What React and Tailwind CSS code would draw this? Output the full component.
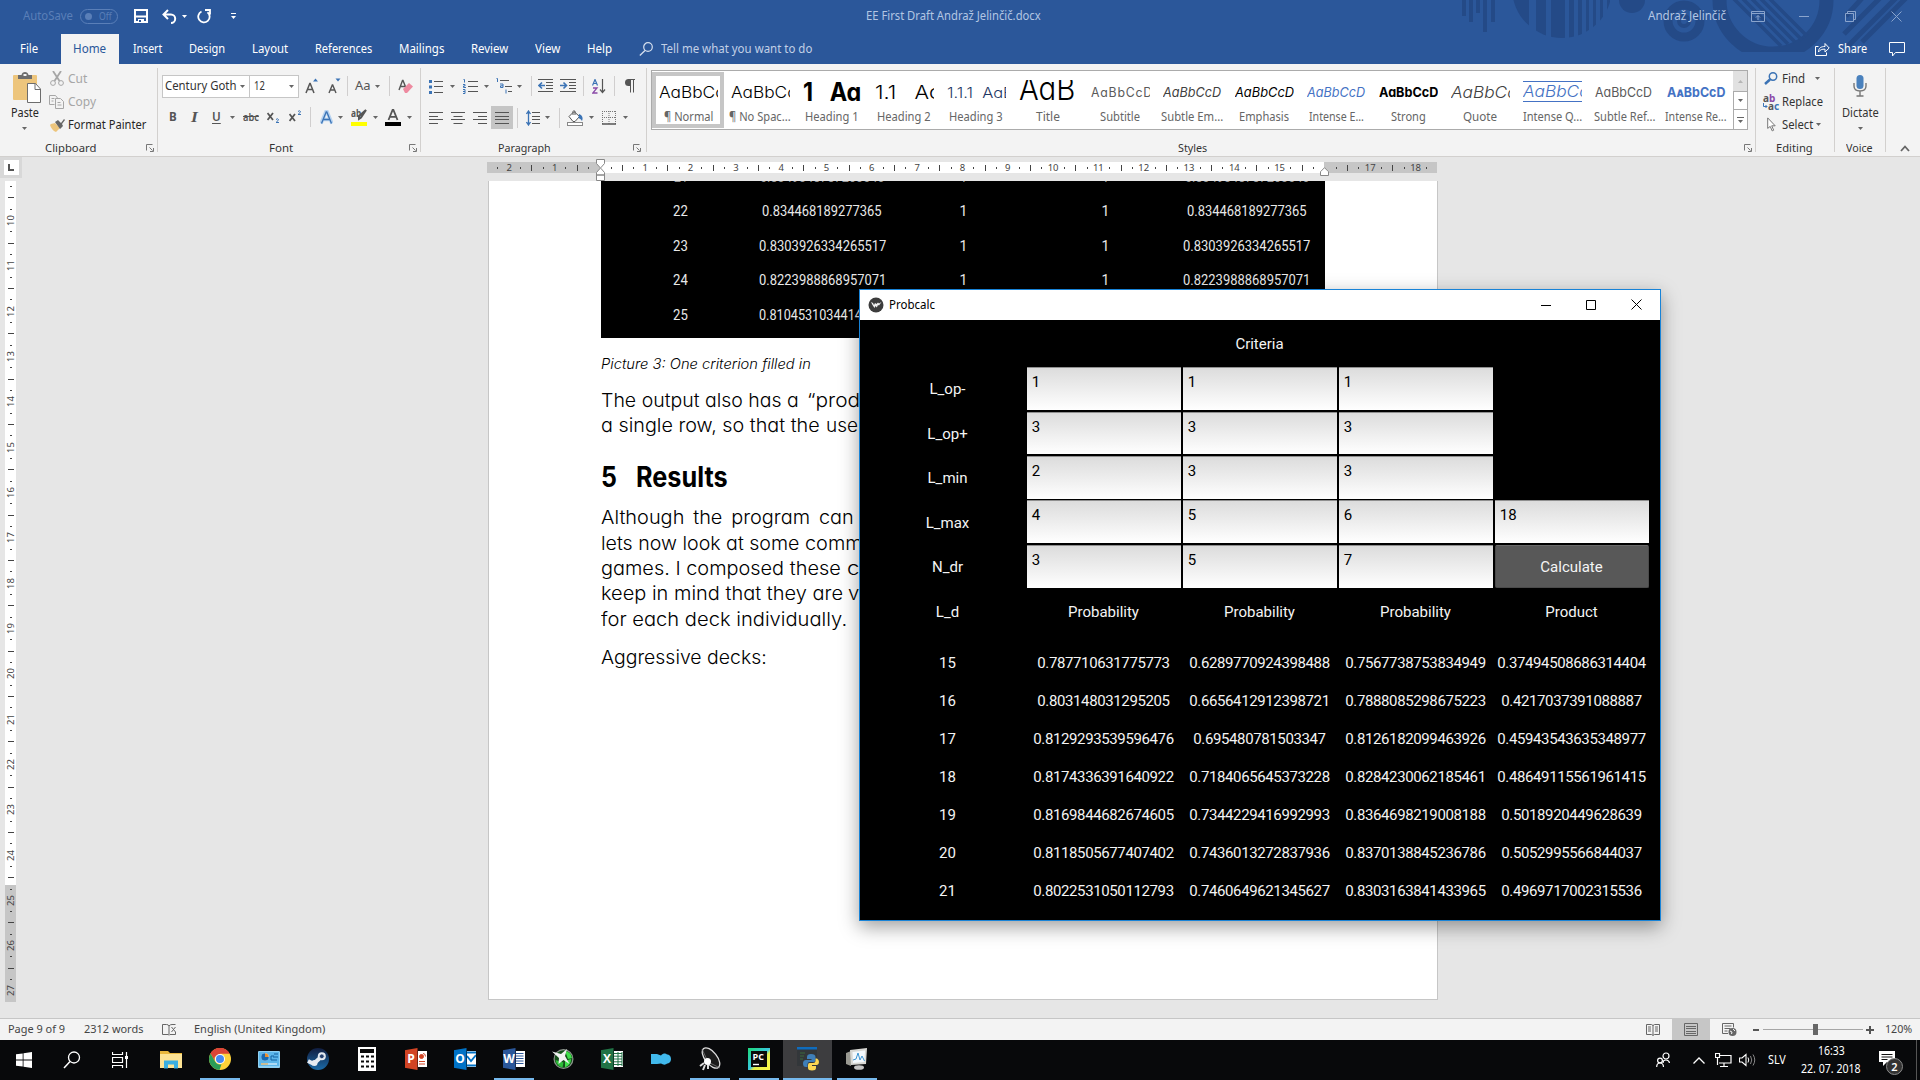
import React, { useLayoutEffect, useRef } from "react";

/* Text stretched horizontally to fill the width of its box. */
function Fit({ className = "", children }) {
  const box = useRef(null);
  const inner = useRef(null);
  useLayoutEffect(() => {
    const natural = inner.current.offsetWidth;
    const wanted = box.current.clientWidth;
    if (natural > 0 && wanted > 0) {
      inner.current.style.transform = `scaleX(${wanted / natural})`;
    }
  }, []);
  return (
    <span ref={box} className={`block shrink-0 whitespace-nowrap ${className}`}>
      <span ref={inner} className="inline-block origin-left whitespace-pre">{children}</span>
    </span>
  );
}

function Svg({ w, h, className = "", children }) {
  return (
    <svg width={w} height={h} viewBox={`0 0 ${w} ${h}`} fill="none" className={`block shrink-0 ${className}`}>
      {children}
    </svg>
  );
}

const Caret = ({ className = "", fill = "#666" }) => (
  <Svg w={5} h={3} className={className}><path d="M0 0h5L2.5 3z" fill={fill} /></Svg>
);
const Sep = ({ className = "" }) => <span className={`block h-5 w-px shrink-0 bg-[#d0cece] ${className}`} />;
const Launcher = ({ className = "" }) => (
  <Svg w={8} h={8} className={className}>
    <path d="M.5 6.5v-6h6M3.5 3.5l3 3M7.5 4v3.5H4" stroke="#777" />
  </Svg>
);

/* ---------- title bar ---------- */

function Decoration() {
  return (
    <Svg w={400} h={52} className="absolute left-[1455px] top-0">
      <g fill="#244a87">
        <rect x="7" width="4" height="16" /><rect x="14" width="4" height="22" />
        <rect x="21" width="4" height="13" /><rect x="28" width="4" height="32" /><rect x="36" width="4" height="22" />
        <clipPath id="ball"><circle cx="107" cy="-12" r="50" /></clipPath>
        <g clipPath="url(#ball)">
          <path d="M55 0h19v40H55zM81 0h10v40H81zM96 0h14v40H96zM114 0h5v40h-5zM123 0h4v40h-4zM131 0h3v40h-3zM138 0h3v40h-3zM145 0h3v40h-3zM152 0h3v40h-3z" />
        </g>
        <circle cx="177" cy="0" r="13" />
        <circle cx="229" cy="21" r="7" />
      </g>
      <circle cx="229" cy="21" r="16" stroke="#244a87" strokeWidth="9" />
      <circle cx="229" cy="21" r="3" fill="#2b579a" />
      <circle cx="318" cy="0" r="53.500" stroke="#244a87" strokeWidth="14" />
      <g stroke="#244a87" strokeWidth="3.500">
        <path d="M276 -4l50 50M285 -4l48 48M294 -4l46 46M303 -4l44 44M312 -4l40 40" />
      </g>
    </Svg>
  );
}

function DecorationRight() {
  return (
    <Svg w={80} h={52} className="absolute left-[1840px] top-0">
      <g stroke="#244a87" strokeWidth="5">
        <path d="M6 16L24 -4M4 34L42 -4M8 46L58 -4M22 42L66 -2" />
      </g>
    </Svg>
  );
}

function TitleBar() {
  return (
    <div className="relative flex h-[34px] items-center overflow-hidden pb-[2px] text-[12px] text-[#b3c6e3]">
      <Fit className="ml-[23px] w-[50px] text-[#5a7fb8]">AutoSave</Fit>
      <span className="ml-[7px] flex h-[15px] w-[38px] shrink-0 items-center rounded-full border border-[#5a7fb8] pl-[4px]">
        <span className="block size-[7px] rounded-full bg-[#5a7fb8]" />
        <Fit className="ml-[7px] w-[13px] text-[10px] text-[#5a7fb8]">Off</Fit>
      </span>
      <Svg w={14} h={14} className="ml-[16px]">
        <path d="M1 1h12v12H1z" stroke="#fff" strokeWidth="2" /><path d="M2 6.500h10v2H2zM4 10h6v4H4z" fill="#fff" /><path d="M5 11h2v2H5z" fill="#2b579a" />
      </Svg>
      <Svg w={15} h={15} className="ml-[14px]">
        <path d="M1.500 5.500H9a4.200 4.200 0 0 1 0 8.400M6 1L1.500 5.500 6 10" stroke="#fff" strokeWidth="2" />
      </Svg>
      <Caret className="ml-[5px]" fill="#fff" />
      <Svg w={14} h={15} className="ml-[10px]">
        <path d="M4.500 2.500A5.700 5.700 0 1 0 10.500 3.200M8 1h5v4.500" stroke="#fff" strokeWidth="1.800" />
      </Svg>
      <Svg w={5} h={7} className="ml-[20px]"><path d="M0 .5h5" stroke="#fff" /><path d="M0 3h5L2.500 6z" fill="#fff" /></Svg>
      <Fit className="ml-[630px] w-[175px]">EE First Draft Andraž Jelinčič.docx</Fit>
      <Fit className="relative z-10 ml-[607px] w-[78px]">Andraž Jelinčič</Fit>
      <Svg w={14} h={11} className="relative z-10 ml-[25px]">
        <path d="M.5.5h13v10H.5zM.5 2.500h13M7 9V4.500M5 6.500l2-2 2 2" stroke="#8aa4cd" />
      </Svg>
      <Svg w={10} h={11} className="relative z-10 ml-[34px]"><path d="M0 5.500h10" stroke="#8aa4cd" /></Svg>
      <Svg w={11} h={11} className="relative z-10 ml-[36px]"><path d="M.5 2.500h8v8h-8zM2.500 2.500v-2h8v8h-2" stroke="#8aa4cd" /></Svg>
      <Svg w={11} h={11} className="relative z-10 ml-[35px]"><path d="M.5.5l10 10M10.500.5l-10 10" stroke="#8aa4cd" /></Svg>
    </div>
  );
}

function Tabs() {
  return (
    <div className="relative z-10 flex h-[30px] items-center text-[12px] text-white">
      <Fit className="ml-[20px] w-[18px]">File</Fit>
      <span className="ml-[23px] flex h-full w-[58px] shrink-0 items-center bg-[#f3f3f3] pl-[12px] text-[#2b579a]">
        <Fit className="w-[33px]">Home</Fit>
      </span>
      <Fit className="ml-[14px] w-[29px]">Insert</Fit>
      <Fit className="ml-[27px] w-[36px]">Design</Fit>
      <Fit className="ml-[27px] w-[36px]">Layout</Fit>
      <Fit className="ml-[27px] w-[57px]">References</Fit>
      <Fit className="ml-[27px] w-[45px]">Mailings</Fit>
      <Fit className="ml-[27px] w-[37px]">Review</Fit>
      <Fit className="ml-[27px] w-[25px]">View</Fit>
      <Fit className="ml-[27px] w-[25px]">Help</Fit>
      <Svg w={14} h={14} className="ml-[27px]"><circle cx="9" cy="5" r="4.300" stroke="#d5dfee" strokeWidth="1.200" /><path d="M6 8.500L.8 13.500" stroke="#d5dfee" strokeWidth="1.300" /></Svg>
      <Fit className="ml-[8px] w-[151px] text-[#c2d0e6]">Tell me what you want to do</Fit>
      <Svg w={15} h={14} className="ml-[1003px]">
        <path d="M3.500 4.500h-3v9h11v-3M3.500 10c0-4 2.500-5.500 6.500-5.500V1.500L14.200 6 10 10V7.200C7 7 5 7.800 3.500 10z" stroke="#fff" />
      </Svg>
      <Fit className="ml-[8px] w-[29px]">Share</Fit>
      <Svg w={16} h={15} className="ml-[22px]"><path d="M.5.500h15v10h-9l-3 3.500v-3.500h-3z" stroke="#fff" /></Svg>
    </div>
  );
}

/* ---------- ribbon ---------- */

function Group({ label, labelClass, width, launcher, children }) {
  return (
    <div className={`mt-1 flex h-[84px] shrink-0 flex-col border-r border-[#d2d0ce] ${width}`}>
      <div className="h-[71px] shrink-0">{children}</div>
      <div className="flex h-[18px] shrink-0 items-center text-[11.5px] text-[#333]">
        <Fit className={labelClass}>{label}</Fit>
        {launcher && <Launcher className={launcher} />}
      </div>
    </div>
  );
}

function Clipboard() {
  return (
    <Group label="Clipboard" labelClass="ml-[45px] w-[51px]" width="w-[158px]" launcher="ml-[50px]">
      <div className="flex text-[12px] text-[#262626]">
        <div className="w-[50px] shrink-0 pl-[11px] pt-[4px]">
          <Svg w={29} h={31} className="ml-[2px]">
            <rect y="3" width="24" height="25" rx="1" fill="#edc57c" />
            <path d="M5 3h3.500c.5-4 6.500-4 7 0H19v4H5z" fill="#6d6d6d" /><rect x="10.500" y="2" width="3" height="2" fill="#f3f3f3" />
            <path d="M14.500 11.500h8l5 5.500v13.500h-13z" fill="#fff" stroke="#6d6d6d" /><path d="M22 11.500v6h6" stroke="#6d6d6d" />
          </Svg>
          <Fit className="mt-[1px] w-[28px] leading-[18px]">Paste</Fit>
          <Caret className="ml-[11px] mt-[5px]" />
        </div>
        <div className="-mt-px w-[107px]">
          <div className="flex h-[23px] items-center text-[#a6a6a6]">
            <Svg w={14} h={15}><path d="M3 0l6.500 10M11 0L4.500 10" stroke="#a6a6a6" strokeWidth="1.800" /><circle cx="3" cy="12" r="2.400" stroke="#a6a6a6" /><circle cx="11" cy="12" r="2.400" stroke="#a6a6a6" /></Svg>
            <Fit className="ml-[4px] w-[19px]">Cut</Fit>
          </div>
          <div className="flex h-[23px] items-center text-[#a6a6a6]">
            <Svg w={15} h={14} className="-ml-px"><path d="M5.500 9.500h-5v-9h6l2 2.500M2.500 3.500h3M2.500 6h2M6.500 3.500h5l3 3v7h-8zM8.500 7.500h3M8.500 10h4" stroke="#a6a6a6" /></Svg>
            <Fit className="ml-[4px] w-[28px]">Copy</Fit>
          </div>
          <div className="flex h-[23px] items-center">
            <Svg w={15} h={14}><path d="M1 6l4-1 5 5-4 4C3 13 1 10 0 7z" fill="#edc57c" /><path d="M5 4l3-2 3 3 3-4 1 1-3 4 1 2-3 3z" fill="#666" /></Svg>
            <Fit className="ml-[3px] w-[78px]">Format Painter</Fit>
          </div>
        </div>
      </div>
    </Group>
  );
}

function FontGroup() {
  return (
    <Group label="Font" labelClass="ml-[111px] w-[24px]" width="w-[263px]" launcher="ml-[116px]">
      <div className="flex h-[29px] items-center pt-[7px] text-[#555]">
        <div className="ml-[4px] flex h-[23px] w-[88px] shrink-0 items-center border border-[#c6c6c6] bg-white text-[12px] text-[#333]">
          <Fit className="ml-[2px] w-[71px]">Century Goth</Fit><Caret className="ml-[4px]" />
        </div>
        <div className="flex h-[23px] w-[49px] shrink-0 items-center border border-l-0 border-[#c6c6c6] bg-white text-[12px] text-[#333]">
          <Fit className="ml-[4px] w-[11px]">12</Fit><Caret className="ml-[24px]" />
        </div>
        <Svg w={14} h={16} className="ml-[6px]"><path d="M1 15L4.800 5.500h.4L9 15M2.500 11.500h5" stroke="#555" strokeWidth="1.500" /><path d="M8 3.500h5L10.500.5z" fill="#3b73b5" /></Svg>
        <Svg w={13} h={16} className="ml-[9px]"><path d="M1 15L4.300 7h.4L8 15M2 12h5" stroke="#555" strokeWidth="1.400" /><path d="M7.500.5h5l-2.500 3z" fill="#3b73b5" /></Svg>
        <Sep className="ml-[6px]" />
        <Fit className="ml-[7px] w-[16px] text-[13px]">Aa</Fit>
        <Caret className="ml-[4px]" />
        <Sep className="ml-[9px]" />
        <Svg w={15} h={15} className="ml-[8px]"><path d="M1 11L4.500 1.500h.5L8 9M2 7.500h5" stroke="#555" strokeWidth="1.400" /><path d="M5 10l6-6 4 3.500-6 6.500H7z" fill="#ee8aa0" /></Svg>
      </div>
      <div className="mt-[9px] flex h-[22px] items-center text-[13px] text-[#555]">
        <Fit className="ml-[11px] w-[8px] font-bold">B</Fit>
        <Fit className="ml-[14px] w-[7px] font-['Liberation_Serif'] text-[15px] font-bold italic">I</Fit>
        <Fit className="ml-[14px] w-[9px] font-semibold [&>span]:underline [&>span]:underline-offset-2">U</Fit>
        <Caret className="ml-[9px]" />
        <Fit className="ml-[8px] w-[16px] text-[11px] font-semibold [&>span]:line-through">abc</Fit>
        <Svg w={13} h={14} className="ml-[8px]"><path d="M.5 3l5.500 7M6 3L.5 10" stroke="#555" strokeWidth="1.800" /><path d="M9 9.500q1.500-1.500 2.500 0 0 1-2.500 3h3" stroke="#3b73b5" /></Svg>
        <Svg w={13} h={14} className="ml-[9px]"><path d="M.5 4l5.500 7M6 4L.5 11" stroke="#555" strokeWidth="1.800" /><path d="M9 1.500q1.500-1.500 2.500 0 0 1-2.500 3h3" stroke="#3b73b5" /></Svg>
        <Sep className="ml-[8px]" />
        <Svg w={13} h={15} className="ml-[9px]"><path d="M1 13.500L6 1.500h1l5 12M3.500 9.500h6" stroke="#b8d3f0" strokeWidth="3.500" /><path d="M1.500 13.500L6.200 2h.6l4.700 11.500M3.500 9.500h6" stroke="#3b73b5" strokeWidth="1.300" /></Svg>
        <Caret className="ml-[5px]" />
        <div className="ml-[8px] flex w-[16px] shrink-0 flex-col">
          <div className="flex h-[13px] items-start">
            <Fit className="-mt-[2px] w-[10px] text-[10px] font-bold leading-[12px]">ab</Fit>
            <Svg w={9} h={12} className="-ml-[3px]"><path d="M8 1L3 8.500l-3 2 1-3.500z" stroke="#555" strokeWidth="2" /></Svg>
          </div>
          <span className="block h-[4px] bg-[#ffff00]" />
        </div>
        <Caret className="ml-[6px]" />
        <Svg w={16} h={17} className="ml-[7px]"><path d="M3.500 11L7.600 1h.8l4.100 10M5 7.800h6" stroke="#555" strokeWidth="1.800" /><rect y="13" width="16" height="4" fill="#000" /></Svg>
        <Caret className="ml-[6px]" />
      </div>
    </Group>
  );
}

const Lines = ({ d, className = "" }) => <Svg w={14} h={12} className={className}><path d={d} stroke="#555" /></Svg>;

function Paragraph() {
  return (
    <Group label="Paragraph" labelClass="ml-[77px] w-[53px]" width="w-[226px]" launcher="ml-[82px]">
      <div className="flex h-[29px] items-center pt-[7px]">
        <Svg w={14} h={15} className="ml-[8px]"><path d="M5 2.500h9M5 7.500h9M5 13.500h9" stroke="#555" /><path d="M0 1h3v3H0zM0 6.500h3v3H0zM0 12h3v3H0z" fill="#3b73b5" /></Svg>
        <Caret className="ml-[7px]" />
        <Svg w={15} h={16} className="ml-[8px]"><path d="M5 3.500h10M5 8.500h10M5 13.500h10" stroke="#555" /><path d="M.5 1.500h1v3M0 6.500h2v1.500H.5v1.500H3M0 11.500h2v4H0M0 13.500h2" stroke="#3b73b5" /></Svg>
        <Caret className="ml-[6px]" />
        <Svg w={16} h={16} className="ml-[7px]"><path d="M4 2.500h9M9 8.500h7M12 13.500h4" stroke="#555" /><path d="M.5.500h1v3.500M4 6h3v3.500H4.500V7.800H7M10 11.500v4" stroke="#3b73b5" /></Svg>
        <Caret className="ml-[5px]" />
        <Sep className="ml-[9px]" />
        <Svg w={15} h={14} className="ml-[6px]"><path d="M0 .5h15M8 3.500h7M8 6.500h7M8 9.500h7M0 12.500h15" stroke="#555" /><path d="M7 6.500H1M4 3.500L1 6.500l3 3" stroke="#3b73b5" strokeWidth="1.600" /></Svg>
        <Svg w={16} h={14} className="ml-[7px]"><path d="M0 .5h16M9 3.500h7M9 6.500h7M9 9.500h7M0 12.500h16" stroke="#555" /><path d="M0 6.500h6M3.500 3.500l3 3-3 3" stroke="#3b73b5" strokeWidth="1.600" /></Svg>
        <Sep className="ml-[7px]" />
        <Svg w={14} h={15} className="ml-[8px]"><path d="M.5 6.500L3 .5l2.500 6M1.500 4.500h3" stroke="#3b73b5" strokeWidth="1.200" /><path d="M1 9h4L.8 14H5.500" stroke="#8a4aa8" strokeWidth="1.300" /><path d="M10.500 0v13M8 10.500l2.500 3 2.500-3" stroke="#555" strokeWidth="1.200" /></Svg>
        <Sep className="ml-[8px]" />
        <Svg w={10} h={14} className="ml-[10px]"><path d="M5.500.5v13M8.500.5v13M3.500.5H10" stroke="#555" /><path d="M5 0H3.500a3.200 3.200 0 0 0 0 7H5z" fill="#555" /></Svg>
      </div>
      <div className="mt-[9px] flex h-[23px] items-center">
        <Lines d="M0 .5h14M0 4.500h9M0 7.500h14M0 11.500h9" className="ml-[8px]" />
        <Lines d="M0 .5h14M2.500 4.500h9M0 7.500h14M2.500 11.500h9" className="ml-[8px]" />
        <Lines d="M0 .5h14M5 4.500h9M0 7.500h14M5 11.500h9" className="ml-[8px]" />
        <span className="ml-[4px] flex h-[23px] w-[22px] shrink-0 items-center justify-center bg-[#c5c5c5]">
          <Lines d="M0 .5h14M0 4.500h14M0 7.500h14M0 11.500h14" />
        </span>
        <Sep className="ml-[4px]" />
        <Svg w={14} h={16} className="ml-[8px]"><path d="M6 2.500h8M6 6.500h8M6 9.500h8M6 13.500h8" stroke="#555" /><path d="M2.500 1v14M.5 4l2-3 2 3M.5 12l2 3 2-3" stroke="#3b73b5" strokeWidth="1.300" /></Svg>
        <Caret className="ml-[5px]" />
        <Sep className="ml-[9px]" />
        <Svg w={16} h={16} className="ml-[7px]"><path d="M2 6.500L7 1.500l5.500 5L8 11.500H6z" fill="#fff" stroke="#555" /><path d="M6 5V1.500q1-2 2 0V5" stroke="#555" /><path d="M12 4q5 2 3 7-1-2-3.500-3z" fill="#3b73b5" /><rect x=".5" y="12.500" width="15" height="3" fill="#fff" stroke="#888" /></Svg>
        <Caret className="ml-[6px]" />
        <Svg w={14} h={14} className="ml-[8px]"><path d="M.5 0v13M13.500 0v13M7 0v13M0 .5h14M0 6.500h14" stroke="#777" strokeDasharray="1 1" /><path d="M0 13h14" stroke="#555" strokeWidth="1.500" /></Svg>
        <Caret className="ml-[7px]" />
      </div>
    </Group>
  );
}

const GOTHIC = "font-['Inter'] font-light [font-feature-settings:'cv11']";
const GOTHIC_SMALL = "font-['Inter'] font-normal [font-feature-settings:'cv11']";

const STYLES = [
  ["¶ Normal", "w-[49px]", "AaBbCc", `text-[16.5px] text-black ${GOTHIC}`],
  ["¶ No Spac...", "w-[62px]", "AaBbCc", `text-[16.5px] text-black ${GOTHIC}`],
  ["Heading 1", "w-[54px]", "1   Aa", "text-[25px] text-black font-['Inter'] font-bold [font-feature-settings:'cv11']"],
  ["Heading 2", "w-[54px]", "1.1   Ac", `text-[19px] text-black ${GOTHIC}`],
  ["Heading 3", "w-[54px]", "1.1.1  AaB", `text-[14.5px] text-[#1f3864] ${GOTHIC}`],
  ["Title", "w-[24px]", "AaB", `-mt-[9px] text-[33px] text-black ${GOTHIC}`],
  ["Subtitle", "w-[40px]", "AaBbCcD", `text-[12.5px] tracking-[0.8px] text-[#5a5a5a] ${GOTHIC_SMALL}`],
  ["Subtle Em...", "w-[62px]", "AaBbCcD", `text-[13.5px] italic text-[#404040] ${GOTHIC_SMALL}`],
  ["Emphasis", "w-[50px]", "AaBbCcD", `text-[13.5px] italic text-black ${GOTHIC_SMALL}`],
  ["Intense E...", "w-[55px]", "AaBbCcD", `text-[13.5px] italic text-[#4472c4] ${GOTHIC_SMALL}`],
  ["Strong", "w-[35px]", "AaBbCcD", "text-[13.5px] text-black font-['Inter'] font-bold [font-feature-settings:'cv11']"],
  ["Quote", "w-[34px]", "AaBbCc", `text-[16.5px] italic text-[#404040] ${GOTHIC}`],
  ["Intense Q...", "w-[59px]", "AaBbCc", `text-[16.5px] italic text-[#4472c4] ${GOTHIC}`],
  ["Subtle Ref...", "w-[61px]", "AaBbCcD", `text-[13.5px] [font-variant:small-caps] text-[#5a5a5a] ${GOTHIC_SMALL}`],
  ["Intense Re...", "w-[62px]", "AaBbCcD", "text-[13.5px] [font-variant:small-caps] text-[#4472c4] font-['Inter'] font-bold"],
];

const PREVIEW_WIDTHS = [
  "w-[66px]", "w-[66px]", "w-[58px]", "w-[66px]", "w-[67px]", "w-[56px]", "w-[62px]", "w-[58px]",
  "w-[59px]", "w-[58px]", "w-[59px]", "w-[66px]", "w-[66px]", "w-[57px]", "w-[58px]",
];

function Styles() {
  return (
    <Group label="Styles" labelClass="ml-[531px] w-[29px]" width="w-[1109px]" launcher="ml-[537px]">
      <div className="ml-[4px] flex h-[61px] w-[1097px] pt-[2px]">
        <div className="flex h-[60px] w-full shrink-0 border border-[#ababab] bg-white">
          {STYLES.map(([name, nameWidth, sample, look], i) => (
            <div key={name} className={`mt-px flex h-[56px] w-[72px] shrink-0 flex-col items-center ${i === 0 ? "border-4 border-[#c6c6c6] pt-[4px]" : "pt-[8px]"}`}>
              <div className={`flex w-[59px] shrink-0 items-center overflow-hidden ${name === "Intense Q..." ? "mb-[3px] mt-px h-[21px] border-y border-[#4472c4]" : "h-[25px]"}`}>
                <Fit className={`leading-[25px] ${PREVIEW_WIDTHS[i]} ${look}`}>{sample}</Fit>
              </div>
              <Fit className={`mt-[2px] text-[12px] leading-[20px] text-[#666] ${nameWidth}`}>{name}</Fit>
            </div>
          ))}
          <div className="ml-px flex w-[14px] flex-col">
            <span className="flex h-[20px] items-center justify-center bg-[#e1e1e1]"><Svg w={5} h={3}><path d="M0 3h5L2.500 0z" fill="#b5b5b5" /></Svg></span>
            <span className="flex h-[19px] items-center justify-center border-y border-l border-[#ababab]"><Caret /></span>
            <span className="flex h-[19px] items-center justify-center border-l border-[#ababab]"><Svg w={7} h={6}><path d="M0 .5h7" stroke="#666" /><path d="M1 3h5L3.500 6z" fill="#666" /></Svg></span>
          </div>
        </div>
      </div>
    </Group>
  );
}

function Editing() {
  return (
    <Group label="Editing" labelClass="ml-[20px] w-[37px]" width="w-[79px]">
      <div className="-mt-px text-[12px] text-[#333]">
        <div className="flex h-[23px] items-center">
          <Svg w={14} h={13} className="ml-[8px]"><circle cx="9" cy="4.500" r="3.700" stroke="#3b73b5" strokeWidth="1.500" /><path d="M6 7.500L1 12" stroke="#3b73b5" strokeWidth="2.500" /></Svg>
          <Fit className="ml-[4px] w-[23px]">Find</Fit><Caret className="ml-[10px]" />
        </div>
        <div className="flex h-[23px] items-center">
          <div className="ml-[7px] flex w-[16px] flex-col text-[10px] font-bold leading-[8px] text-[#555]">
            <Fit className="w-[12px]">a<span className="text-[#8a4aa8]">b</span></Fit>
            <span className="flex"><Svg w={5} h={8}><path d="M.5 1v3.500H4M2.500 3L4 4.500 2.500 6" stroke="#3b73b5" /></Svg><Fit className="w-[11px]">a<span className="text-[#3b73b5]">c</span></Fit></span>
          </div>
          <Fit className="ml-[3px] w-[41px]">Replace</Fit>
        </div>
        <div className="flex h-[23px] items-center">
          <Svg w={9} h={15} className="ml-[11px]"><path d="M.7.900v10.500l2.500-2 2 4.500 1.500-.7-2-4.400h3.500z" fill="#fff" stroke="#777" /></Svg>
          <Fit className="ml-[6px] w-[31px]">Select</Fit><Caret className="ml-[3px]" />
        </div>
      </div>
    </Group>
  );
}

function Voice() {
  return (
    <Group label="Voice" labelClass="ml-[11px] w-[27px]" width="w-[51px]">
      <div className="flex flex-col items-center pt-[7px] text-[12px] text-[#333]">
        <Svg w={14} h={22}><rect x="3.500" width="7" height="14" rx="3.500" fill="#4a81bd" /><path d="M1 8v3q0 5 6 5t6-5V8M7 16v5M3.500 21h7" stroke="#777" strokeWidth="1.400" /></Svg>
        <Fit className="mt-[7px] w-[37px] leading-[18px]">Dictate</Fit>
        <Caret className="mt-[5px]" />
      </div>
    </Group>
  );
}

/* ---------- rulers ---------- */

function marks(first, last, blank) {
  const out = [];
  for (let q = first; q <= last; q++) {
    if (q % 4 === 0) out.push(blank.includes(q / 4) ? "" : String(Math.abs(q / 4)));
    else out.push(q % 2 === 0 ? "half" : "quarter");
  }
  return out;
}

function Mark({ m }) {
  if (m === "half") return <span className="mt-px block h-[6px] w-px bg-[#444]" />;
  if (m === "quarter") return <span className="block h-[2px] w-px bg-[#444]" />;
  return <span className="text-[9.5px] leading-none text-[#444]">{m}</span>;
}

function HorizontalRuler() {
  return (
    <div className="relative mt-[5px] h-[20px] w-[950px] shrink-0 ml-[465px]">
      <div className="flex h-[11px] w-full">
        <span className="block w-[114px] bg-[#c6c6c6]" />
        <span className="block w-[723px] bg-white" />
        <span className="block w-[113px] bg-[#c6c6c6]" />
      </div>
      <div className="absolute inset-x-0 top-0 flex h-[11px] overflow-hidden">
        <div className="-ml-[6px] flex font-['Noto_Sans']">
          {marks(-10, 73, [0, 16]).map((m, i) => (
            <span key={i} className="flex w-[11.339px] shrink-0 items-center justify-center"><Mark m={m} /></span>
          ))}
        </div>
      </div>
      <Svg w={9} h={22} className="absolute left-[109px] -top-[3px]">
        <path d="M.5.5h8v4L5 8.500v1l3.500 4v2.500h-8v-2.500L4 9.500v-1L.5 4.500zM.5 16h8v5.500h-8z" fill="#fff" stroke="#888" />
      </Svg>
      <Svg w={9} h={9} className="absolute left-[833px] top-[5px]"><path d="M4.500.7l4 4v3.800h-8V4.700z" fill="#fff" stroke="#888" /></Svg>
    </div>
  );
}

function VerticalRuler() {
  return (
    <div className="relative ml-[5px] h-[821px] w-[11px] shrink-0 overflow-hidden bg-[linear-gradient(#fff_704px,#c6c6c6_704px)] font-['Noto_Sans']">
      {marks(37, 109, []).map((m, i) => (
        <span key={i} className="flex h-[11.339px] items-center justify-center">
          <span className="flex size-[11px] -rotate-90 items-center justify-center"><Mark m={m} /></span>
        </span>
      ))}
    </div>
  );
}

/* ---------- document ---------- */

const PICTURE_ROWS = [
  ["21", "w-[14px]", "0.8349348787263546", "w-[124px]"],
  ["22", "w-[15px]", "0.834468189277365", "w-[120px]"],
  ["23", "w-[15px]", "0.8303926334265517", "w-[127px]"],
  ["24", "w-[15px]", "0.8223988868957071", "w-[127px]"],
  ["25", "w-[15px]", "0.8104531034414", "w-[103px]"],
];

function Picture() {
  return (
    <div className="flex h-[157px] w-[724px] flex-col overflow-hidden bg-black font-['Roboto'] text-[14px] font-normal leading-[8px] text-[#e8e8e8]">
      {PICTURE_ROWS.map(([n, nw, value, vw], i) => (
        <div key={n} className={`flex h-[34.400px] shrink-0 items-center ${i === 0 ? "-mt-[21.200px] text-[#999]" : ""}`}>
          <span className="flex w-[159px] shrink-0 justify-center"><Fit className={nw}>{n}</Fit></span>
          <span className={`flex w-[124px] shrink-0 ${i === 4 ? "justify-start -ml-px" : "justify-center"}`}><Fit className={vw}>{value}</Fit></span>
          {i < 4 && (
            <>
              <span className="w-[159px] shrink-0 text-center">1</span>
              <span className="w-[125px] shrink-0 text-center">1</span>
              <span className="flex w-[157px] shrink-0 justify-center"><Fit className={vw}>{value}</Fit></span>
            </>
          )}
        </div>
      ))}
    </div>
  );
}

function Line({ w, text, w2, rest }) {
  return (
    <div className="flex h-[25.400px] items-center">
      <Fit className={w}>{text}</Fit>
      {rest && <Fit className={w2}>{rest}</Fit>}
    </div>
  );
}

function Page() {
  return (
    <div className={`ml-[472px] h-[819px] w-[950px] shrink-0 border-x border-b border-[#c6c6c6] bg-white pl-[112px] text-[18.500px] text-black ${GOTHIC}`}>
      <Picture />
      <div className="mt-[15.500px] flex h-[20px] items-center text-[14px] italic"><Fit className="w-[210px]">Picture 3: One criterion filled in</Fit></div>
      <div className="mt-[14.500px]">
        <Line w="w-[198px]" text="The output also has a" w2="ml-[8px] w-[53px]" rest="“prod" />
        <Line w="w-[219px]" text="a single row, so that the" w2="ml-[6px] w-[39px]" rest="user" />
      </div>
      <div className="mt-[20px] flex h-[36px] items-center text-[28px] font-bold">
        <Fit className="w-[16px]">5</Fit><Fit className="ml-[19px] w-[92px]">Results</Fit>
      </div>
      <div className="mt-[10.600px]">
        <Line w="w-[253px] [word-spacing:3px]" text="Although the program can" />
        <Line w="w-[198px]" text="lets now look at some" w2="ml-[6px] w-[58px]" rest="comm" />
        <Line w="w-[240px]" text="games. I composed these" w2="ml-[6px] w-[12px]" rest="c" />
        <Line w="w-[242px]" text="keep in mind that they are" w2="ml-[5px] w-[11px]" rest="v" />
        <Line w="w-[246px]" text="for each deck individually." />
      </div>
      <div className="mt-[13px]"><Line w="w-[166px]" text="Aggressive decks:" /></div>
    </div>
  );
}

/* ---------- Probcalc window ---------- */

const CRITERIA = [
  ["L_op-", ["1", "1", "1"]],
  ["L_op+", ["3", "3", "3"]],
  ["L_min", ["2", "3", "3"]],
  ["L_max", ["4", "5", "6", "18"]],
  ["N_dr", ["3", "5", "7"]],
];

const RESULTS = [
  ["15", "0.787710631775773", "0.6289770924398488", "0.7567738753834949", "0.37494508686314404"],
  ["16", "0.803148031295205", "0.6656412912398721", "0.7888085298675223", "0.4217037391088887"],
  ["17", "0.8129293539596476", "0.695480781503347", "0.8126182099463926", "0.45943543635348977"],
  ["18", "0.8174336391640922", "0.7184065645373228", "0.8284230062185461", "0.48649115561961415"],
  ["19", "0.8169844682674605", "0.7344229416992993", "0.8364698219008188", "0.5018920449628639"],
  ["20", "0.8118505677407402", "0.7436013272837936", "0.8370138845236786", "0.5052995566844037"],
  ["21", "0.8022531050112793", "0.7460649621345627", "0.8303163841433965", "0.4969717002315536"],
];

const Cell = ({ children }) => <span className="flex items-center justify-center pr-px pt-[2px]">{children}</span>;

function Probcalc() {
  return (
    <div className="absolute left-[859px] top-[289px] z-20 flex h-[632px] w-[802px] flex-col border border-[#1883d7] bg-black font-['Roboto'] text-[15px] text-[#f4f4f4] shadow-[0_6px_18px_rgba(0,0,0,0.38)]">
      <div className="flex h-[30px] shrink-0 items-center bg-white font-['Noto_Sans','Open_Sans'] text-[12px] text-black">
        <Svg w={16} h={16} className="-mt-px ml-[8px]">
          <circle cx="8" cy="8" r="7.500" fill="#3c3c3c" />
          <path d="M3 5l2 1 1 2 1-2 1.500 1L10 5.500l1 1L13.500 5 11 8.500l-1-.5-1.200 2.500L7.500 9l-1 2L4.500 8z" fill="#f0f0f0" />
        </Svg>
        <Fit className="ml-[5px] w-[46px]">Probcalc</Fit>
        <Svg w={10} h={10} className="-mt-px ml-[606px]"><path d="M0 5.500h10" stroke="#000" /></Svg>
        <Svg w={10} h={10} className="-mt-px ml-[35px]"><path d="M.5.5h9v9h-9z" stroke="#000" /></Svg>
        <Svg w={11} h={11} className="-mt-px ml-[35px]"><path d="M.5.5l10 10M10.500.5l-10 10" stroke="#000" /></Svg>
      </div>
      <div className="flex-1 px-[10px] pt-[2px]">
        <div className="-mt-px mb-px grid h-[44.400px] grid-cols-5">
          <span /><span /><Cell>Criteria</Cell>
        </div>
        {CRITERIA.map(([label, values]) => (
          <div key={label} className="grid h-[44.400px] grid-cols-5">
            <Cell>{label}</Cell>
            {values.map((v, i) => (
              <span key={i} className="m-[0.800px] border-t border-[#8f8f8f] bg-linear-to-b from-[#dcdcdc] to-white pl-[5px] pt-[3px] leading-[22px] text-black">{v}</span>
            ))}
            {label === "N_dr" && (
              <span className="m-[0.800px] flex items-center justify-center rounded-[2px] border border-[#4a4a4a] border-t-[#6a6a6a] bg-[#585858] pr-px pt-[2px]">Calculate</span>
            )}
          </div>
        ))}
        <div className="mt-[0.600px] grid h-[43.800px] grid-cols-5">
          <Cell>L_d</Cell><Cell>Probability</Cell><Cell>Probability</Cell><Cell>Probability</Cell><Cell>Product</Cell>
        </div>
        <div className="pt-[11px]">
          {RESULTS.map(([n, ...values]) => (
            <div key={n} className="grid h-[38px] grid-cols-5">
              <Cell>{n}</Cell>
              {values.map((v) => <Cell key={v}><span className="tracking-[-0.38px]">{v}</span></Cell>)}
            </div>
          ))}
        </div>
      </div>
    </div>
  );
}

/* ---------- status bar and taskbar ---------- */

function StatusBar() {
  return (
    <div className="flex h-[22px] shrink-0 items-center border-t border-[#c6c6c6] bg-[#f3f3f3] text-[11.500px] leading-[16px] text-[#444]">
      <Fit className="-mt-[2px] ml-[8px] w-[57px]">Page 9 of 9</Fit>
      <Fit className="-mt-[2px] ml-[19px] w-[59px]">2312 words</Fit>
      <Svg w={15} h={13} className="-mt-px ml-[19px]"><path d="M6.500 11.500H.5v-10h4q2 0 2.500 1.500v9.500M7 3q1-1.500 3-1.500h3.500M13.500 9v2.500H8M9.500 4l4 5M13.500 4l-4 5" stroke="#666" /></Svg>
      <Fit className="-mt-[2px] ml-[17px] w-[131px]">English (United Kingdom)</Fit>
      <Svg w={14} h={13} className="-mt-px ml-[1321px]"><path d="M.5 1.500h5L7 2.500l1.500-1h5v10h-5L7 12.500l-1.500-1h-5zM7 2v10M2 4h3M2 6h3M2 8h3M9 4h3M9 6h3M9 8h3" stroke="#666" /></Svg>
      <span className="ml-[12px] flex h-full w-[38px] shrink-0 items-center justify-center bg-[#c6c6c6] pb-px">
        <Svg w={14} h={13}><path d="M.5.5h13v12H.5zM2 3.500h10M2 5.500h10M2 8.500h10M2 10.500h10" stroke="#666" /></Svg>
      </span>
      <Svg w={15} h={13} className="-mt-px ml-[12px]"><path d="M6 10.500H.5V.5h11v4M2.500 3h7M2.500 5.500h6M2.500 8h3" stroke="#666" /><circle cx="10.500" cy="9" r="4" fill="#666" /><path d="M8 8l2 1-.5 2M11 6l2 2" stroke="#f3f3f3" /></Svg>
      <span className="ml-[16px] block h-[2px] w-[6px] bg-[#555]" />
      <span className="-mt-px ml-[4px] flex w-[100px] shrink-0 items-center">
        <span className="block h-px w-[50px] bg-[#a6a6a6]" /><span className="block h-[11px] w-[5px] bg-[#666]" /><span className="block h-px w-[45px] bg-[#a6a6a6]" />
      </span>
      <Svg w={8} h={8} className="ml-[3px]"><path d="M0 4h8M4 0v8" stroke="#555" strokeWidth="2" /></Svg>
      <Fit className="-mt-[2px] ml-[11px] w-[27px]">120%</Fit>
    </div>
  );
}

function Slot({ on, active, children }) {
  return (
    <div className={`flex h-full w-[49px] shrink-0 flex-col items-center ${active ? "bg-[#3d3d3f]" : ""}`}>
      <div className="flex h-[38px] pt-px items-center justify-center pb-px">{children}</div>
      {on && <span className={`block h-[2px] bg-[#76b9ed] ${active ? "w-full" : "w-[40px]"}`} />}
    </div>
  );
}

function Office({ color, dark, letter, children }) {
  return (
    <span className="flex items-center">
      <span className={`flex h-[22px] w-[13px] items-center justify-center font-['Open_Sans'] text-[12px] font-bold leading-none text-white [clip-path:polygon(0_10%,100%_0,100%_100%,0_90%)] ${color}`}>{letter}</span>
      <Svg w={9} h={16}><rect width="9" height="16" fill="#fff" /><g stroke={dark}>{children}</g></Svg>
    </span>
  );
}

function TaskBar() {
  return (
    <div className="flex h-[40px] shrink-0 bg-[#08090b] text-white">
      <div className="flex w-[146px] items-center">
        <Svg w={16} h={16} className="ml-[16px]"><path d="M0 2.300l6.700-.9v6.200H0zM7.500 1.200L16 0v7.600H7.500zM0 8.400h6.700v6.200L0 13.700zM7.500 8.400H16V16l-8.500-1.200z" fill="#fff" /></Svg>
        <Svg w={18} h={18} className="ml-[31px]"><circle cx="11" cy="6.500" r="5.500" stroke="#fff" strokeWidth="1.300" /><path d="M7 10.500L1 17" stroke="#fff" strokeWidth="1.500" /></Svg>
        <Svg w={17} h={16} className="ml-[31px]"><path d="M.5 0v2.500h10V0M.5 16v-2.500h10V16M.5 5.500h10v5H.5zM14.500 0v16" stroke="#fff" strokeWidth="1.200" /><path d="M13 4h3v3h-3z" fill="#fff" /></Svg>
      </div>
      <Slot><Svg w={22} h={19}><path d="M0 1h8l2 2h12v15H0z" fill="#e9b73c" /><path d="M0 4h22v14H0z" fill="#fde394" /><path d="M4 18.500v-8h14v8h-4v-4H8v4z" fill="#3aaee0" /></Svg></Slot>
      <Slot on><Svg w={22} h={22}>
        <circle cx="11" cy="11" r="11" fill="#fdd13a" />
        <path d="M11 11L1.500 5.500A11 11 0 0 1 20.500 5.500H11z" fill="#db4437" /><path d="M11 0a11 11 0 0 1 9.500 5.500H11A5.500 5.500 0 0 0 6.200 13.700L1.500 5.500A11 11 0 0 1 11 0z" fill="#db4437" />
        <path d="M1.500 5.500L6.200 13.700A5.500 5.500 0 0 0 12.500 16.300L10.500 22A11 11 0 0 1 1.500 5.500z" fill="#2a9d58" />
        <circle cx="11" cy="11" r="5" fill="#fff" /><circle cx="11" cy="11" r="4" fill="#4688f1" />
      </Svg></Slot>
      <Slot><Svg w={22} h={17}><rect width="22" height="17" rx="1" fill="#8fd0f2" /><rect x="1" y="1" width="20" height="14" fill="#5cb6ea" /><circle cx="7" cy="6" r="3.800" fill="#fff" /><path d="M7 6V2.200A3.800 3.800 0 0 1 10.800 6z" fill="#e88e2e" /><path d="M7 6h3.800A3.800 3.800 0 1 1 7 2.200z" fill="#1769b0" /><path d="M13 9V5h3M16 3h4M15 6h5M13 9h6" stroke="#12609f" /><path d="M3 13h16" stroke="#fff" /><path d="M3 13h7" stroke="#e8a33a" /></Svg></Slot>
      <Slot><Svg w={22} h={22}>
        <linearGradient id="steam" x1="0" y1="0" x2="0" y2="1"><stop stopColor="#111d40" /><stop offset="1" stopColor="#1b6ba8" /></linearGradient>
        <circle cx="11" cy="11" r="11" fill="url(#steam)" /><path d="M1 13l6 3M7 15.500L14 9" stroke="#e6ebf2" strokeWidth="4" /><circle cx="14.800" cy="8.300" r="4" fill="#e6ebf2" /><circle cx="14.800" cy="8.300" r="2.400" fill="#24406e" stroke="#e6ebf2" strokeWidth=".8" /><circle cx="7.500" cy="15" r="3" fill="#e6ebf2" />
      </Svg></Slot>
      <Slot><Svg w={18} h={24}><rect width="18" height="24" fill="#fff" /><path d="M2 2h14v4H2z" fill="#0a0a0a" /><path d="M3 9.500h3M8 9.500h3M13 9.500h3M3 14.500h3M8 14.500h3M13 14.500h3M3 19.500h3M8 19.500h3M13 19.500h3" stroke="#0a0a0a" strokeWidth="2" /></Svg></Slot>
      <Slot><Office color="bg-[#d14424]" dark="#d14424" letter="P"><circle cx="3.500" cy="5.500" r="2" fill="#d14424" /><path d="M1 10.500h6M1 13h6M5 2.500q2.500 0 2.500 3" /></Office></Slot>
      <Slot><Office color="bg-[#0072c6]" dark="#0072c6" letter="O"><path d="M0 1.500h9M0 14.500h9M0 5l4 5 5-6" strokeWidth="1.800" /></Office></Slot>
      <Slot on><Office color="bg-[#2b579a]" dark="#2b579a" letter="W"><path d="M0 2.500h7.500M0 5h7.500M0 7.500h7.500M0 10h7.500M0 12.500h7.500" /></Office></Slot>
      <Slot><Svg w={22} h={22}><circle cx="11.500" cy="11" r="10" fill="#8d968d" /><circle cx="11.500" cy="11" r="8.800" fill="#14501a" /><path d="M13 3q6 1 7 7l-4 1zM13 13l6-2q0 6-6 8.500z" fill="#3fe04a" /><path d="M3.500 12q1 6 7 7.500l1-5z" fill="#2fbf3a" /><path d="M0 3.500l9 2.500 6-5-2 7 4.500 8-6-4-5 4 .5-6z" fill="#f1f3f1" /></Svg></Slot>
      <Slot><Office color="bg-[#217346]" dark="#217346" letter="X"><path d="M0 2.500h8M0 5.200h8M0 8h8M0 10.800h8M0 13.500h8M4 1v14M8 1v14" /></Office></Slot>
      <Slot><Svg w={20} h={12}><path d="M0 1h6l4 1.500C12 0 15 0 16 1.500c3 0 4 2.500 4 4.500s-1 4.500-4 4.500c-1 1.500-4 1.500-6 0L6 11H0z" fill="#41b9ec" /></Svg></Slot>
      <Slot on><Svg w={24} h={24}><ellipse cx="13" cy="11" rx="6" ry="12" transform="rotate(-38 13 11)" fill="#1a1a1a" stroke="#ddd" strokeWidth="1.300" /><path d="M4 2l6 13M22 21L10 15" stroke="#888" strokeWidth=".7" /><circle cx="9.500" cy="14.500" r="3.500" fill="#fff" /><path d="M6 16l-4 3M7 18l-2 5M10 18v4" stroke="#ddd" strokeWidth="2" /></Svg></Slot>
      <Slot on><Svg w={22} h={22}>
        <linearGradient id="pc" x1="0" y1="0" x2="1" y2="1"><stop offset=".1" stopColor="#21d789" /><stop offset=".5" stopColor="#38c8e0" /><stop offset=".6" stopColor="#e5f04a" /><stop offset="1" stopColor="#fcf84a" /></linearGradient>
        <rect width="22" height="22" fill="url(#pc)" /><rect x="3" y="3" width="16" height="16" fill="#0a0a0a" />
        <text x="4.500" y="11.500" fill="#fff" fontFamily="Open Sans" fontSize="9" fontWeight="700">PC</text><path d="M5 16.500h6" stroke="#fff" strokeWidth="1.400" />
      </Svg></Slot>
      <Slot on active><Svg w={24} h={24}>
        <rect x="1" y="1" width="20" height="18" fill="#33373a" /><rect x="1" y="0" width="20" height="2.500" fill="#0f6cbd" /><path d="M4 6h5M4 9h4M4 12h3" stroke="#3d6a3d" />
        <path d="M15 7q-4 0-4 3v2h4.500v1H10q-3 0-3 3.500t3 3.500h1.500v-3q0-2 2.500-2h4q1.500 0 1.500-2v-3q0-3-4.500-3z" fill="#3f7fb8" /><path d="M16 23.500q4 0 4-2.500v-2h-4v-1h5q2-.5 2-3t-2-3.500h-1.500v2.500q0 2-2.500 2h-3.500q-1.500 0-1.500 2v3q0 2.500 4 2.500z" fill="#fcd752" />
      </Svg></Slot>
      <Slot on><Svg w={24} h={22}><path d="M1 5l5-2v15l-5-2z" fill="#9a9a92" /><path d="M5 2l17-2-1 16-15 1z" fill="#d8d8d4" /><path d="M7.500 4L20 2.500 19.300 14 8 15z" fill="#f3f9fd" /><path d="M8 12l3-1 2-6 2 7 2-4 2.500 5" stroke="#3d94d1" /><ellipse cx="14" cy="19.500" rx="5" ry="2.300" fill="#c4c4c4" /></Svg></Slot>

      <div className="ml-auto flex w-[264px] shrink-0 items-center">
        <Svg w={15} h={16}><circle cx="10" cy="4" r="3" stroke="#fff" strokeWidth="1.200" /><path d="M7 11q0-3 3-3t3.500 3M.7 15q0-4 3.300-4t3.500 4" stroke="#fff" strokeWidth="1.200" /><circle cx="4" cy="8.500" r="2.400" stroke="#fff" strokeWidth="1.200" /></Svg>
        <Svg w={12} h={7} className="ml-[22px]"><path d="M.5 6.500L6 1l5.500 5.500" stroke="#fff" strokeWidth="1.300" /></Svg>
        <Svg w={17} h={14} className="ml-[10px]"><path d="M4 2.500h12v7.500H4M5 13.500h8M9 10v3.500" stroke="#fff" strokeWidth="1.200" /><path d="M.5.5h4v4h-4zM2.500 5v7" stroke="#fff" strokeWidth="1.200" /></Svg>
        <Svg w={17} h={14} className="ml-[7px]"><path d="M.5 5h2.500l4-3.500v11L3 9H.5z" stroke="#fff" strokeWidth="1.100" /><path d="M9 4.500q1.500 2.500 0 5" stroke="#fff" /><path d="M11.500 3q2.500 4 0 8M14 1.500q3.500 5.500 0 11" stroke="#888" /></Svg>
        <Fit className="ml-[12px] w-[18px] text-[12px]">SLV</Fit>
        <div className="ml-[15px] flex w-[60px] flex-col items-center text-[12px] leading-[18px]">
          <Fit className="w-[27px]">16:33</Fit>
          <Fit className="w-[60px]">22. 07. 2018</Fit>
        </div>
        <div className="relative ml-[18px] size-[20px]">
          <Svg w={16} h={16}><path d="M0 1h16v11H8l-4 4v-4H0z" fill="#fff" /><path d="M2.500 4.500h11M2.500 7h11M2.500 9.500h6" stroke="#111" /></Svg>
          <span className="absolute left-[7px] top-[8px] flex size-[17px] items-center justify-center rounded-full border border-[#8a8a8a] bg-[#333] text-[11px] font-semibold leading-none">2</span>
        </div>
        <span className="ml-[17px] block h-full w-px bg-[#555]" />
      </div>
    </div>
  );
}

export default function App() {
  return (
    <div className="relative flex h-[1080px] w-[1920px] flex-col overflow-hidden bg-[#e6e6e6] font-['Noto_Sans','Open_Sans',sans-serif]">
      <header className="relative h-[64px] shrink-0 bg-[#2b579a]">
        <Decoration />
        <DecorationRight />
        <TitleBar />
        <Tabs />
      </header>
      <div className="flex h-[93px] shrink-0 border-b border-[#d2d0ce] bg-[#f3f3f3]">
        <Clipboard />
        <FontGroup />
        <Paragraph />
        <Styles />
        <Editing />
        <Voice />
        <Svg w={10} h={7} className="ml-[14px] mt-[81px]"><path d="M1 6l4-4.500L9 6" stroke="#666" strokeWidth="1.800" /></Svg>
      </div>
      <div className="flex h-[24px] shrink-0">
        <span className="flex h-[21px] w-[22px] shrink-0 items-center justify-center bg-[#d8d8d8]">
          <span className="flex size-[15px] items-center justify-center bg-white">
            <Svg w={6} h={7}><path d="M1 0v6h5" stroke="#555" strokeWidth="2" /></Svg>
          </span>
        </span>
        <HorizontalRuler />
      </div>
      <main className="flex h-[837px] shrink-0">
        <VerticalRuler />
        <Page />
      </main>
      <StatusBar />
      <TaskBar />
      <Probcalc />
    </div>
  );
}
